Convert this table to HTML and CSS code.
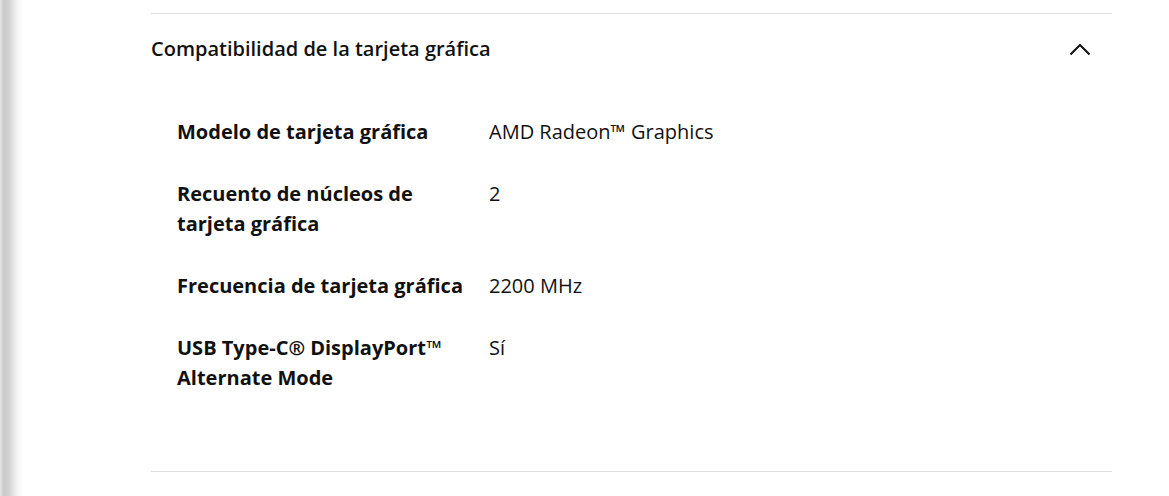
FILE: index.html
```html
<!DOCTYPE html>
<html lang="es">
<head>
    <meta charset="utf-8">
    <title>Especificaciones</title>
    <link rel="stylesheet" href="styles.css">
</head>
<body>
    <div class="page">
        <div class="edge-shadow"></div>
        <div class="specs">
            <section class="accordion">
                <div class="accordion-header">
                    <h2 class="accordion-title">Compatibilidad de la tarjeta gráfica</h2>
                    <svg class="chevron" width="22" height="14" viewBox="0 0 22 14">
                        <path d="M1.5 12.5 L11 3 L20.5 12.5" fill="none" stroke="#111" stroke-width="2"/>
                    </svg>
                </div>
                <dl class="spec-list">
                    <div class="spec-row">
                        <dt>Modelo de tarjeta gráfica</dt>
                        <dd>AMD Radeon™ Graphics</dd>
                    </div>
                    <div class="spec-row">
                        <dt>Recuento de núcleos de tarjeta gráfica</dt>
                        <dd>2</dd>
                    </div>
                    <div class="spec-row">
                        <dt>Frecuencia de tarjeta gráfica</dt>
                        <dd>2200 MHz</dd>
                    </div>
                    <div class="spec-row">
                        <dt>USB Type-C® DisplayPort™ Alternate Mode</dt>
                        <dd>Sí</dd>
                    </div>
                </dl>
            </section>
        </div>
    </div>
</body>
</html>
```

FILE: styles.css
```css
/* Estilos generales */
body {
    margin: 0;
    font-family: "Open Sans", Arial, sans-serif;
    background-color: #fff;
    color: #111;
}

.page {
    display: flex;
    height: 496px;
    overflow: hidden;
}

/* Sombra del panel de la izquierda */
.edge-shadow {
    width: 24px;
    flex-shrink: 0;
    background: linear-gradient(to right, #e4e4e4 0, #c9c9c9 4px, #d2d2d2 9px, #ececec 15px, #fafafa 20px, #fff 24px);
}

.specs {
    margin-left: 127px;
    width: 961px;
    padding-top: 13px;
}

/* Acordeón */
.accordion {
    border-top: 1px solid #dedede;
    border-bottom: 1px solid #dedede;
    padding-bottom: 78px;
}

.accordion-header {
    display: flex;
    align-items: center;
    justify-content: space-between;
    height: 68px;
    padding-right: 21px;
}

.accordion-title {
    margin: 0;
    font-size: 20px;
    font-weight: 600;
}

.chevron {
    display: block;
    margin-top: 2px;
}

/* Lista de especificaciones */
.spec-list {
    margin: 0;
    padding: 35px 0 0 26px;
    display: flex;
    flex-direction: column;
    gap: 32px;
}

.spec-row {
    display: flex;
    font-size: 20px;
    line-height: 30px;
}

.spec-row dt {
    width: 290px;
    margin-right: 22px;
    font-weight: 700;
}

.spec-row dd {
    margin: 0;
}
```
